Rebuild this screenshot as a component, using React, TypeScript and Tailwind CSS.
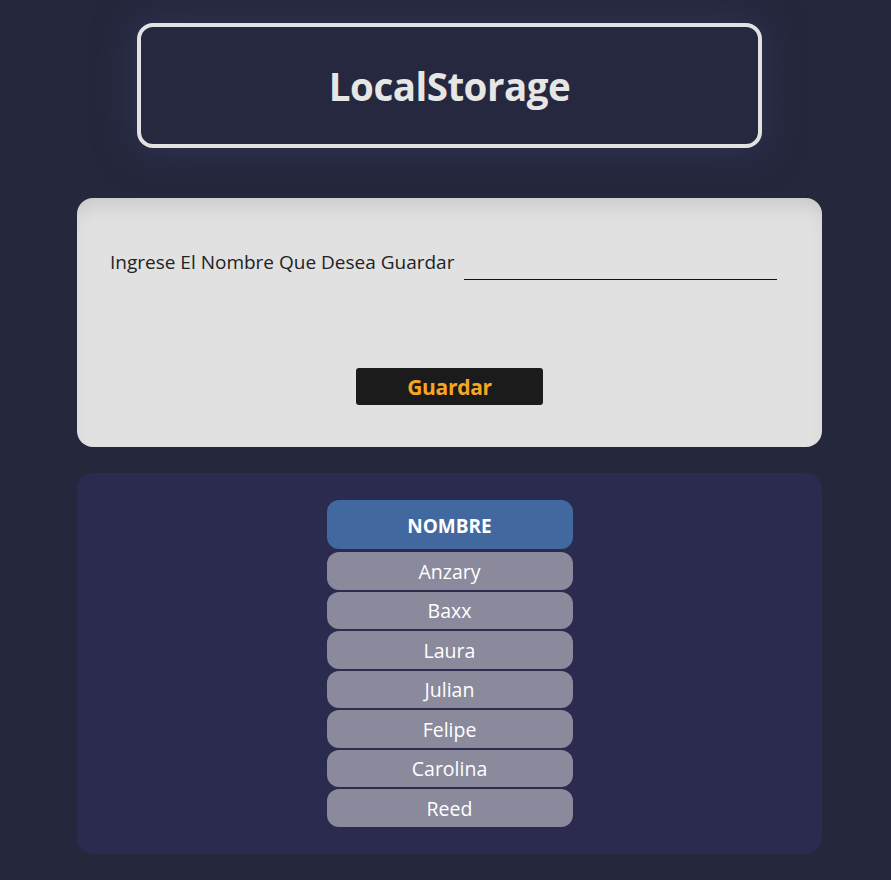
const nombres = ['Anzary', 'Baxx', 'Laura', 'Julian', 'Felipe', 'Carolina', 'Reed'];

export default function App() {
  return (
    <div
      className="h-[880px] w-full overflow-hidden bg-[#25273d] pt-[23px] pl-[8px]"
      style={{ fontFamily: '"Open Sans", "Noto Sans", sans-serif' }}
    >
      <header className="mx-auto flex h-[125px] w-[625px] items-center justify-center rounded-[16px] border-4 border-[#e2e2e0] bg-[#262840] shadow-[0_0_40px_rgba(60,64,100,0.6)]">
        <h1 className="mt-[3px] text-[38.5px] font-bold tracking-[-0.5px] text-[#e6e6e4]">LocalStorage</h1>
      </header>

      <section className="mx-auto mt-[50px] flex h-[249px] w-[745px] flex-col rounded-[16px] bg-[#e1e1e1] px-[33px] pt-[50px] shadow-[inset_0_14px_24px_-12px_rgba(0,0,0,0.15)]">
        <div className="flex items-end">
          <label className="mb-[4px] text-[19px] leading-[28px] text-[#222]">Ingrese El Nombre Que Desea Guardar</label>
          <input className="ml-[10px] w-[313px] border-b border-[#111] bg-transparent pb-[1px] text-[19px] outline-none" />
        </div>
        <button className="mx-auto mt-[88px] h-[37px] w-[187px] rounded-[3px] bg-[#1b1b1b] pt-[2px] text-[21px] font-bold leading-none tracking-[-0.3px] text-[#f5a623]">
          Guardar
        </button>
      </section>

      <section className="mx-auto mt-[26px] flex w-[745px] flex-col items-center rounded-[16px] bg-[#2b2b50] pt-[27px] pb-[27px]">
        <div className="flex h-[49px] w-[246px] items-center justify-center rounded-[12px] bg-[#4169a0] pt-[4px] text-[19px] font-bold text-white">
          NOMBRE
        </div>
        <div className="mt-[3px] flex flex-col gap-[2px]">
          {nombres.map((n) => (
            <div
              key={n}
              className="flex h-[37.5px] w-[246px] items-center justify-center rounded-[12px] bg-[#8a8a9c] pt-[1px] text-[19.5px] text-white"
            >
              {n}
            </div>
          ))}
        </div>
      </section>
    </div>
  );
}
